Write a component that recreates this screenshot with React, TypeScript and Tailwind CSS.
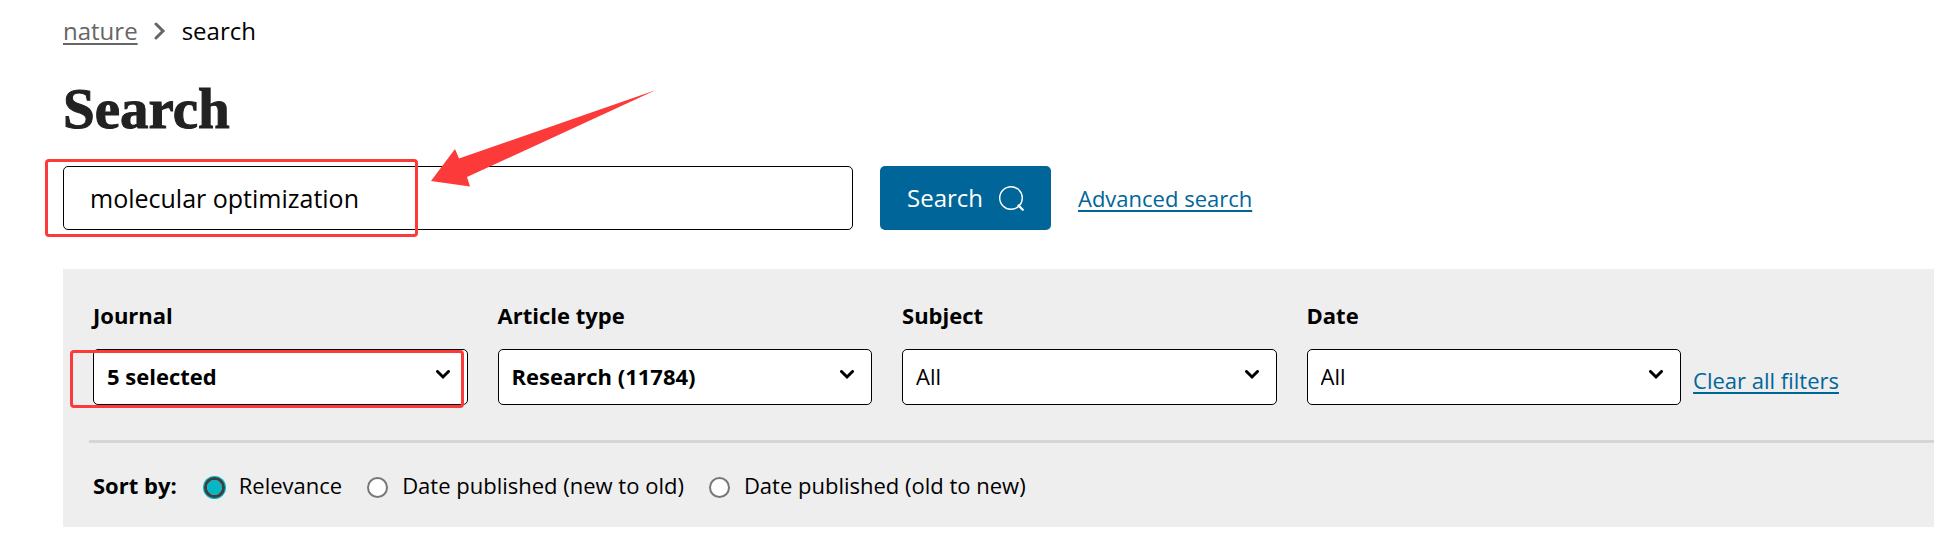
import { useState } from 'react';

const filters = [
  { id: 'journal', label: 'Journal', value: '5 selected', active: true },
  { id: 'article-type', label: 'Article type', value: 'Research (11784)', active: true },
  { id: 'subject', label: 'Subject', value: 'All', active: false },
  { id: 'date', label: 'Date', value: 'All', active: false },
];

const sortOptions = [
  { id: 'relevance', label: 'Relevance' },
  { id: 'date_desc', label: 'Date published (new to old)' },
  { id: 'date_asc', label: 'Date published (old to new)' },
];

function Breadcrumbs() {
  return (
    <nav aria-label="Breadcrumb" className="flex items-center text-[24px] leading-8">
      <a href="#" className="text-[#666] underline decoration-2 underline-offset-[3px]">
        nature
      </a>
      <svg viewBox="0 0 12 18" className="mx-4 h-[18px] w-3" fill="none" stroke="#666" strokeWidth="3" aria-hidden="true">
        <path d="M2 2l7 7-7 7" strokeLinecap="round" />
      </svg>
      <span>search</span>
    </nav>
  );
}

function Arrow() {
  return (
    <svg viewBox="0 0 226 98" className="pointer-events-none absolute -top-[76px] left-[368px] h-[98px] w-[226px]" aria-hidden="true">
      <path d="M0 91L24 59l4 9.500L225 0 36 87l3 9.500z" fill="#fc3a3a" />
    </svg>
  );
}

function SearchForm() {
  const [query, setQuery] = useState('molecular optimization');

  return (
    <form className="flex items-center" onSubmit={(e) => e.preventDefault()}>
      <div className="relative w-full max-w-[790px]">
        <input
          type="text"
          aria-label="Search term"
          value={query}
          onChange={(e) => setQuery(e.target.value)}
          className="block h-16 w-full rounded-[5px] border border-black bg-white px-[26px] text-[25px]"
        />
        <div className="pointer-events-none absolute -top-[7px] -left-[18px] h-[78px] w-[373px] rounded-[4px] border-[3px] border-[#fc3a3a]" />
        <Arrow />
      </div>
      <button
        type="submit"
        className="ml-[27px] flex h-16 shrink-0 items-center gap-4 rounded-[5px] bg-[#069] px-[27px] text-[24px] text-white"
      >
        Search
        <svg viewBox="0 0 25 25" className="size-[25px]" fill="none" stroke="currentColor" aria-hidden="true">
          <circle cx="12" cy="12" r="11.300" strokeWidth="1.400" />
          <path d="M19.500 19.500l4.300 4.300" strokeWidth="2.200" strokeLinecap="round" />
        </svg>
      </button>
      <a href="#" className="ml-[27px] shrink-0 text-[22px] text-[#069] underline decoration-2 underline-offset-[3px]">
        Advanced search
      </a>
    </form>
  );
}

function Filters() {
  return (
    <div className="flex items-end pr-[95px] pl-[30px]">
      <div className="grid flex-1 grid-cols-4 gap-[30px]">
        {filters.map((f) => (
          <div key={f.id} className="flex flex-col gap-[18px]">
            <label htmlFor={f.id} className="text-[22px] leading-8 font-bold">
              {f.label}
            </label>
            <div className="relative">
              <select
                id={f.id}
                className={`block h-14 w-full appearance-none rounded-[5px] border border-black bg-white pr-12 pb-[2px] pl-[13px] text-[22px] ${f.active ? 'font-bold' : 'font-normal'}`}
              >
                <option>{f.value}</option>
              </select>
              <svg viewBox="0 0 14 10" className="pointer-events-none absolute top-[21px] right-[18px] h-[10px] w-[14px]" fill="none" stroke="#000" strokeWidth="3" aria-hidden="true">
                <path d="M1.500 1.500L7 7l5.500-5.500" strokeLinecap="round" />
              </svg>
              {f.id === 'journal' && (
                <div className="pointer-events-none absolute top-px right-1 -bottom-[3px] -left-[23px] rounded-[4px] border-[3px] border-[#fc3a3a]" />
              )}
            </div>
          </div>
        ))}
      </div>
      <a href="#" className="mb-[9px] ml-3 shrink-0 text-[22px] leading-8 text-[#069] underline decoration-2 underline-offset-[3px]">
        Clear all filters
      </a>
    </div>
  );
}

function SortBy() {
  const [sort, setSort] = useState('relevance');

  return (
    <fieldset className="flex items-center pl-[30px] text-[22px] leading-8">
      <legend className="float-left mr-[27px] font-bold">Sort by:</legend>
      <div className="flex gap-[25px]">
        {sortOptions.map((o) => (
          <label key={o.id} className="flex items-center gap-[14px]">
            <input
              type="radio"
              name="order"
              checked={sort === o.id}
              onChange={() => setSort(o.id)}
              className="mt-1 size-[21px] appearance-none rounded-full border-2 border-[#777] bg-white checked:border-[3px] checked:border-[#3c4043] checked:bg-[#01b8c4] checked:bg-clip-padding checked:ring-1 checked:ring-[#01b8c4]"
            />
            {o.label}
          </label>
        ))}
      </div>
    </fieldset>
  );
}

export default function App() {
  return (
    <main className="overflow-hidden bg-white pt-[15px] pb-[18px] pl-[63px] font-['Open_Sans','Noto_Sans',sans-serif] text-black">
      <Breadcrumbs />
      <h1 className="mt-[30px] mb-[25px] font-['Liberation_Serif',serif] text-[57px] leading-16 font-bold text-[#222] [-webkit-text-stroke:1px_#222]">
        Search
      </h1>
      <SearchForm />
      <section className="mt-[39px] bg-[#eee] pt-[30px] pb-[26px]">
        <Filters />
        <hr className="mt-[35px] mb-[26px] ml-[26px] border-t-[3px] border-[#d5d5d5]" />
        <SortBy />
      </section>
    </main>
  );
}
